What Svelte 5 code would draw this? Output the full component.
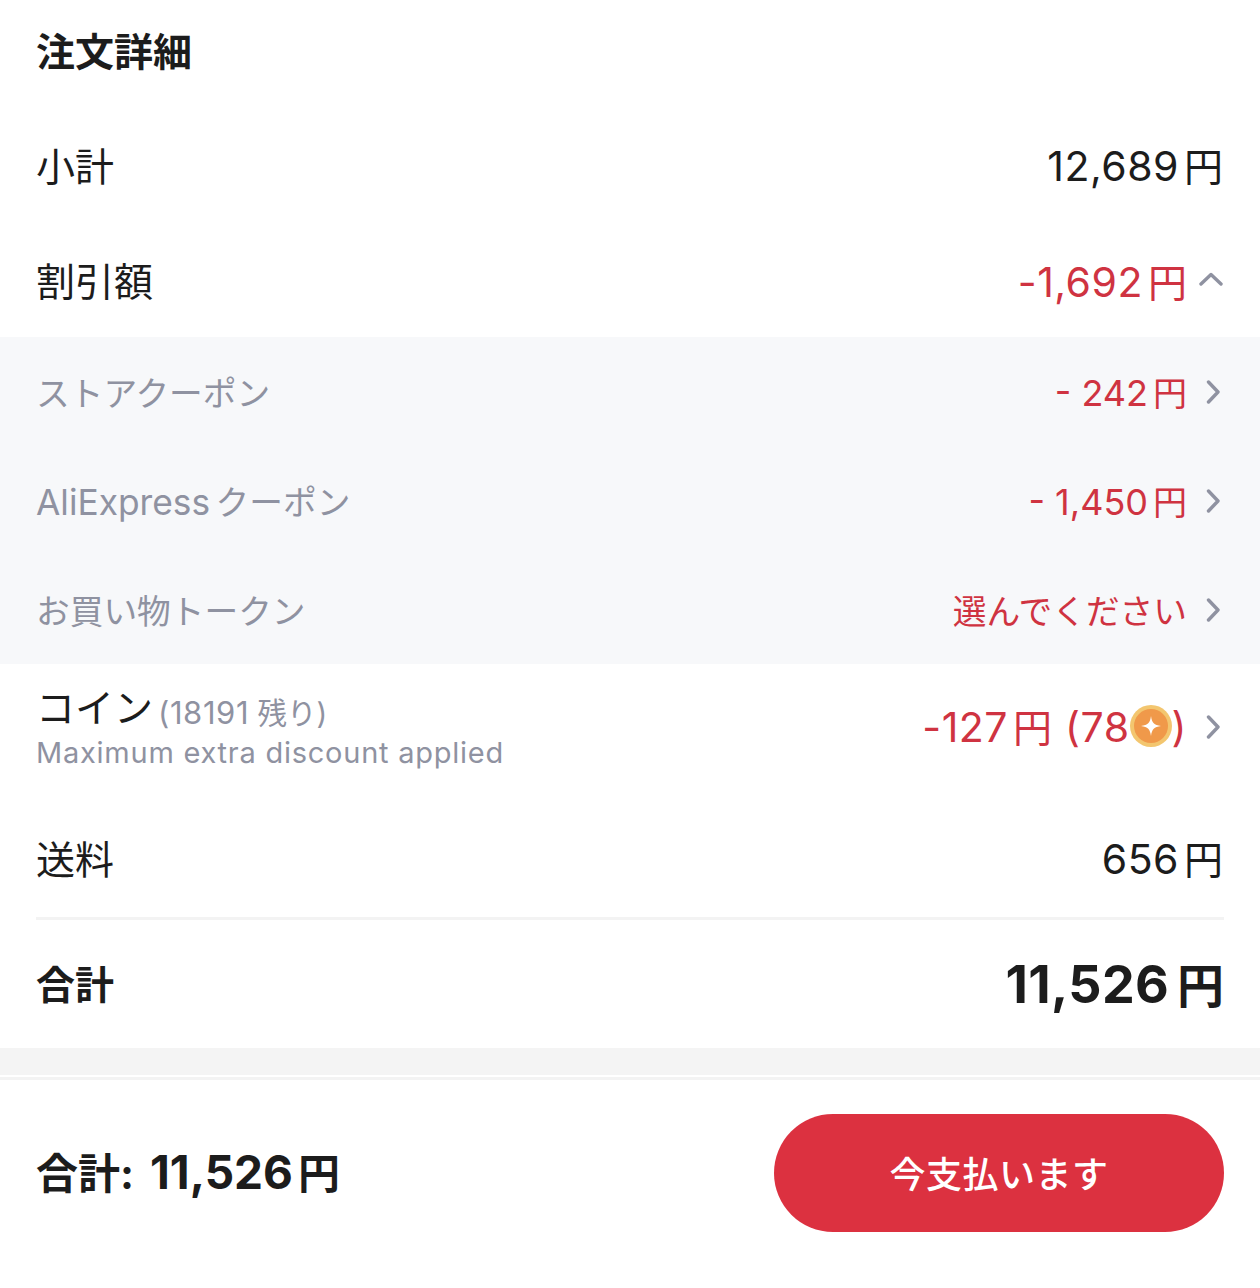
<script>
  const subs = [
    { label: 'ストアクーポン', num: '- 242', yen: true },
    { latin: 'AliExpress', label: ' クーポン', num: '- 1,450', yen: true },
    { label: 'お買い物トークン', text: '選んでください' }
  ];
</script>

<main class="page">
  <h1 class="title">注文詳細</h1>

  <div class="row plain first">
    <span>小計</span>
    <span class="value"><span class="num">12,689</span><span class="yen">円</span></span>
  </div>

  <div class="row plain discount">
    <span>割引額</span>
    <span class="value red"><span class="num">-1,692</span><span class="yen">円</span>
      <svg class="chev up" viewBox="0 0 24 14" aria-hidden="true"><path d="M2 12 L12 2.5 L22 12" /></svg>
    </span>
  </div>

  <div class="band">
    {#each subs as s}
      <div class="row sub">
        <span class="muted">{#if s.latin}<span class="latin">{s.latin}</span>{/if}{s.label}</span>
        <span class="value red">
          {#if s.yen}<span class="subnum">{s.num}</span><span class="subyen">円</span>{:else}{s.text}{/if}
          <svg class="chev" viewBox="0 0 14 24" aria-hidden="true"><path d="M2.5 2 L12 12 L2.5 22" /></svg>
        </span>
      </div>
    {/each}
  </div>

  <div class="row coin">
    <div class="coin-left">
      <div class="coin-title">コイン <small><span class="smallnum">(18191</span> 残り)</small></div>
      <div class="coin-note">Maximum extra discount applied</div>
    </div>
    <span class="value red coin-value"><span class="num">-127</span><span class="yen">円</span><span class="num paren">(78</span><svg class="coin-icon" viewBox="0 0 42 42" aria-hidden="true">
        <circle cx="21" cy="21" r="21" fill="#f3c66f" />
        <circle cx="21" cy="21" r="17" fill="#f0994a" />
        <path d="M21 11 C22 18 24 20 31 21 C24 22 22 24 21 31 C20 24 18 22 11 21 C18 20 20 18 21 11 Z" fill="#fff" />
      </svg><span class="num">)</span>
      <svg class="chev coin-chev" viewBox="0 0 14 24" aria-hidden="true"><path d="M2.5 2 L12 12 L2.5 22" /></svg>
    </span>
  </div>

  <div class="row plain ship">
    <span>送料</span>
    <span class="value"><span class="num">656</span><span class="yen">円</span></span>
  </div>

  <div class="row total">
    <span class="total-label">合計</span>
    <span class="value total-value"><span class="total-num">11,526</span><span class="total-yen">円</span></span>
  </div>

  <div class="gap"></div>

  <footer class="footer">
    <div class="sum">合計: <span class="sum-num">11,526</span><span class="sum-yen">円</span></div>
    <button class="pay">今支払います</button>
  </footer>
</main>

<style>
  :global(body) {
    margin: 0;
    background: #fff;
  }
  .page {
    width: 1260px;
    height: 1288px;
    overflow: hidden;
    font-family: Inter, "Noto Sans CJK JP", sans-serif;
    color: #1c1c1c;
    font-size: 39px;
    box-sizing: border-box;
  }
  .title {
    margin: 0;
    padding: 28px 36px 0;
    font-size: 39px;
    line-height: 48px;
    font-weight: 700;
  }
  .row {
    display: flex;
    justify-content: space-between;
    align-items: center;
    padding: 0 36px;
    box-sizing: border-box;
  }
  .plain {
    height: 115px;
    line-height: 48px;
  }
  .first {
    margin-top: 32px;
    padding-top: 2px;
  }
  .discount {
    height: 114px;
    padding-top: 4px;
  }
  .band {
    background: #f7f8fa;
    height: 327px;
  }
  .sub {
    height: 109px;
    font-size: 33.7px;
  }
  .latin {
    font-size: 35.3px;
    margin-right: -4px;
  }
  .muted {
    color: #8f92a1;
  }
  .value {
    display: inline-flex;
    align-items: baseline;
  }
  .num {
    font-size: 41px;
    letter-spacing: 0.5px;
  }
  .yen {
    margin-left: 5px;
    margin-right: 1px;
  }
  .subnum {
    font-size: 36px;
    white-space: pre;
  }
  .subyen {
    font-size: 34px;
    margin-left: 5px;
  }
  .red {
    color: #cf3341;
  }
  .chev {
    align-self: center;
    width: 14px;
    height: 24px;
    margin-left: 19px;
    margin-right: 4px;
    fill: none;
    stroke: #8f92a1;
    stroke-width: 3.4;
    stroke-linecap: round;
    stroke-linejoin: round;
  }
  .chev.up {
    width: 24px;
    height: 14px;
    margin-left: 11px;
    margin-right: 1px;
    margin-top: -6px;
  }
  .coin {
    height: 126px;
  }
  .coin-value {
    margin-bottom: 4px;
  }
  .coin-chev {
    margin-top: 4px;
  }
  .coin-title {
    line-height: 48px;
  }
  .coin-title small {
    font-size: 29.5px;
    color: #8f92a1;
    margin-left: -6px;
    position: relative;
    top: 2px;
  }
  .smallnum {
    font-size: 31px;
    letter-spacing: 0.6px;
  }
  .coin-note {
    font-size: 29px;
    line-height: 34px;
    margin-top: 1px;
    color: #8f92a1;
    letter-spacing: 0.75px;
  }
  .coin-icon {
    align-self: center;
    width: 42px;
    height: 42px;
    flex: none;
    margin-top: 2px;
  }
  .paren {
    margin-left: 12px;
  }
  .ship {
    height: 127px;
    padding-top: 12px;
  }
  .total {
    height: 131px;
    margin: 0 36px;
    padding: 0 0 4px;
    border-top: 3px solid #f3f3f3;
  }
  .total-label {
    font-weight: 700;
  }
  .total-value {
    font-weight: 700;
  }
  .total-num {
    font-size: 52px;
    letter-spacing: 0.3px;
  }
  .total-yen {
    font-size: 47px;
    margin-left: 8px;
  }
  .gap {
    height: 27px;
    background: #f4f4f4;
    margin-bottom: 2px;
  }
  .footer {
    display: flex;
    justify-content: space-between;
    align-items: center;
    padding: 34px 36px 0;
    border-top: 3px solid #f3f3f3;
  }
  .sum {
    font-size: 42px;
    font-weight: 700;
    display: flex;
    align-items: baseline;
    white-space: pre;
    padding-bottom: 5px;
  }
  .sum-num {
    font-size: 46px;
    margin-left: 6px;
  }
  .sum-yen {
    margin-left: 5px;
  }
  .pay {
    width: 450px;
    height: 118px;
    padding: 0 0 2px;
    border: 0;
    border-radius: 59px;
    background: #dc3140;
    color: #fff;
    font: 500 36px Inter, "Noto Sans CJK JP", sans-serif;
    letter-spacing: 0.5px;
  }
</style>
